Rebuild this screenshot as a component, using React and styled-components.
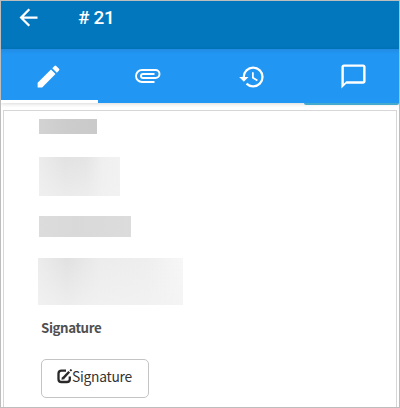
import React from "react";
import styled, { createGlobalStyle } from "styled-components";
import {
  MdArrowBack,
  MdChatBubbleOutline,
  MdEdit,
  MdHistory,
} from "react-icons/md";

const GlobalStyle = createGlobalStyle`
  * { box-sizing: border-box; }
  body { margin: 0; background: #fff; }
`;

const Screen = styled.div`
  width: 400px;
  height: 408px;
  display: flex;
  flex-direction: column;
  overflow: hidden;
  border: 1px solid #bdbdbd;
  background: #fff;
  font-family: "Noto Sans CJK SC", "Noto Sans", sans-serif;
`;

const AppBar = styled.header`
  flex: none;
  height: 48px;
  display: flex;
  align-items: flex-start;
  padding: 3px 0 0 14px;
  background: #0277bd;
  color: #fff;
`;

const BackButton = styled.button`
  display: flex;
  padding: 0;
  border: 0;
  background: none;
  color: inherit;
  font-size: 27px;
`;

const Title = styled.h1`
  margin: 2px 0 0 36px;
  font: 500 19px/24px Roboto, sans-serif;
  letter-spacing: -0.3px;
`;

const Tabs = styled.nav`
  flex: none;
  height: 54px;
  display: grid;
  grid-template-columns: 97px 102px 104px 1fr;
  background: linear-gradient(#218ce4 0, #2196f3 5px);
  box-shadow: 0 1px 4px rgba(0, 0, 0, 0.16);
`;

const Tab = styled.button`
  display: flex;
  align-items: flex-start;
  justify-content: center;
  padding: ${(p) => p.$pad};
  border: 0;
  border-bottom: 3px solid ${(p) => (p.$active ? "#fff" : "transparent")};
  background: none;
  color: #fff;
  font-size: ${(p) => p.$size}px;
`;

const ChatAccent = styled.div`
  flex: none;
  align-self: flex-end;
  width: 95px;
  height: 2px;
  border-radius: 0 0 3px 3px;
  background: #43a9cd;
  z-index: 1;
`;

const Panel = styled.main`
  flex: 1;
  display: flex;
  flex-direction: column;
  align-items: flex-start;
  margin: 5px 2px 0;
  padding: 8px 0 0 35px;
  border: 1px solid #d6d6d6;
  border-bottom: 0;
  background: #fff;
`;

const Redacted = styled.div`
  flex: none;
  width: ${(p) => p.$width}px;
  height: ${(p) => p.$height}px;
  margin: ${(p) => p.$margin};
  background: ${(p) => p.$fill};
`;

const FieldLabel = styled.div`
  margin: 13px 0 0 2px;
  color: #505050;
  font-size: 13.3px;
  font-weight: 700;
  line-height: 20px;
  letter-spacing: -0.4px;
`;

const SignatureButton = styled.button`
  flex: none;
  width: 108px;
  height: 39px;
  display: flex;
  align-items: center;
  margin: 21px 0 0 2px;
  padding: 0 0 5px 15px;
  border: 1px solid #c4c4c4;
  border-radius: 5px;
  background: #fff;
  color: #333;
  font-family: inherit;
  font-size: 13.8px;
  line-height: 20px;
  letter-spacing: -0.25px;
`;

const SignIcon = styled.svg`
  flex: none;
  width: 16px;
  height: 15px;
  margin-right: -1px;
`;

const PaperclipIcon = () => (
  <svg width="26" height="14" viewBox="0 0 26 14" fill="none" stroke="currentColor" strokeWidth="1.9">
    <path d="M19.5 13H7A6 6 0 0 1 7 1h13.5a4 4 0 0 1 0 8H8a2 2 0 0 1 0-4h11.5" />
  </svg>
);

export default function App() {
  return (
    <Screen>
      <GlobalStyle />
      <AppBar>
        <BackButton aria-label="Back"><MdArrowBack /></BackButton>
        <Title># 21</Title>
      </AppBar>
      <Tabs>
        <Tab $active $size={29} $pad="13px 3px 0 0" aria-label="Edit"><MdEdit /></Tab>
        <Tab $size={30} $pad="20px 2px 0 0" aria-label="Attachments"><PaperclipIcon /></Tab>
        <Tab $size={28} $pad="14px 1px 0 0" aria-label="History"><MdHistory /></Tab>
        <Tab $size={29} $pad="13px 0 0 3px" aria-label="Comments"><MdChatBubbleOutline /></Tab>
      </Tabs>
      <ChatAccent />
      <Panel>
        <Redacted $width={58} $height={15} $margin="0" $fill="linear-gradient(90deg, #d3d3d3, #cccccc 50%, #cacaca)" />
        <Redacted
          $width={81} $height={39} $margin="23px 0 0"
          $fill="linear-gradient(transparent, rgba(242,242,242,.6)), linear-gradient(90deg, #ececec, #e2e2e2 32%, #e4e4e4 58%, #efefef 78%, #f2f2f2)"
        />
        <Redacted $width={92} $height={21} $margin="20px 0 0" $fill="linear-gradient(90deg, #dcdcdc, #d9d9d9 40%, #dcdcdc)" />
        <Redacted
          $width={145} $height={47} $margin="21px 0 0 -1px"
          $fill="linear-gradient(transparent, rgba(243,243,243,.7)), linear-gradient(90deg, #ececec, #e1e1e1 20%, #ececec 42%, #eeeeee 75%, #f7f7f7)"
        />
        <FieldLabel>Signature</FieldLabel>
        <SignatureButton>
          <SignIcon viewBox="0 0 16 15" fill="none" stroke="#292929">
            <path d="M9 1.7H4.5Q1.5 1.7 1.5 4.5v5.7q0 2.8 3 2.8h5.3q3 0 3-2.8V7.5" strokeWidth="2.3" />
            <path d="M6 9.4 12.2 2.8" strokeWidth="2.4" />
            <path d="m13.2 1.9 1.3-1.3" strokeWidth="2" />
            <path d="m5.1 7.9-.5 2.7 2.7-.6z" fill="#292929" strokeWidth=".3" />
          </SignIcon>
          Signature
        </SignatureButton>
      </Panel>
    </Screen>
  );
}
